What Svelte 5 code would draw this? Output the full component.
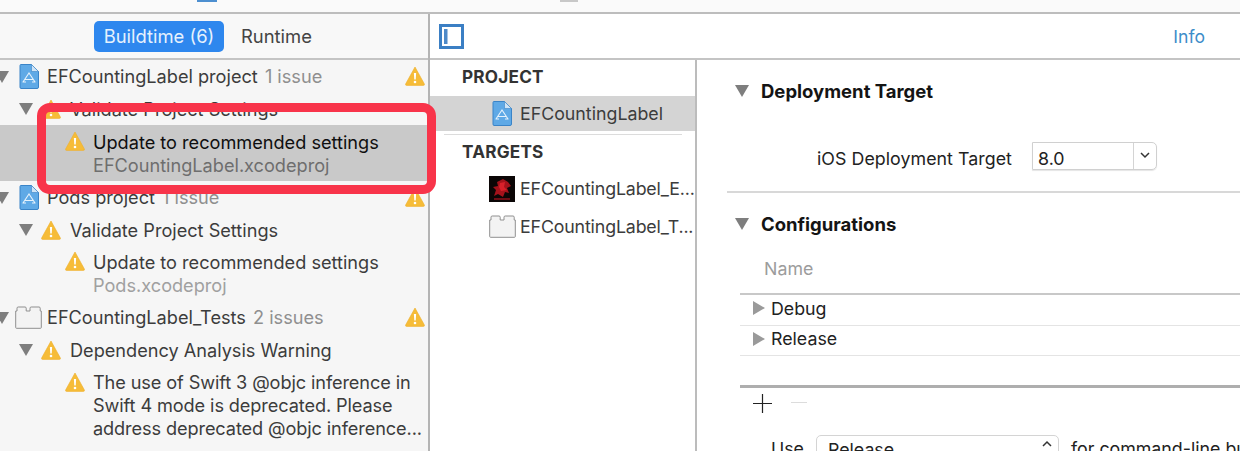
<script>
  const rows = [];
</script>

{#snippet warn(cls = '')}
  <svg class="warn {cls}" viewBox="0 0 20 20" width="20" height="20" aria-hidden="true">
    <path d="M10 1 L19.4 18 Q19.8 19.4 18.4 19.4 L1.6 19.4 Q.2 19.4 .6 18 Z" fill="#f6bc38" stroke="#eeb02c" stroke-width=".6" stroke-linejoin="round"/>
    <path d="M8.9 7 h2.2 l-.4 6.6 h-1.4 Z" fill="#fff"/>
    <circle cx="10" cy="16" r="1.3" fill="#fff"/>
  </svg>
{/snippet}

{#snippet disc(cls = '')}
  <svg class="disc {cls}" viewBox="0 0 14 12" width="14" height="12" aria-hidden="true"><path d="M0 0 H14 L7 12 Z" fill="#7e7e7e"/></svg>
{/snippet}

{#snippet proj()}
  <svg class="proj" viewBox="0 0 20 25" width="20" height="25" aria-hidden="true">
    <path d="M1 1.5 Q1 .5 2 .5 H12.5 L19.5 7.5 V23 Q19.5 24.5 18 24.5 H2 Q1 24.5 1 23 Z" fill="#5fa9e6" stroke="#3a84c8"/>
    <path d="M12.5 .5 V7.5 H19.5 Z" fill="#cfe4f6" stroke="#3a84c8" stroke-width=".6"/>
    <path d="M4 18 L10 9 L16 18 M6 15.5 H14 M3.5 18 H7 M13 18 H16.5" fill="none" stroke="#e6f2fc" stroke-width="1.1"/>
  </svg>
{/snippet}

{#snippet brick()}
  <svg class="brick" viewBox="0 0 27 23" width="27" height="23" aria-hidden="true">
    <path d="M.7 5 H2 V2.2 Q2 1 3.2 1 H10 Q11.2 1 11.2 2.2 V5 H15 V2.2 Q15 1 16.2 1 H24 Q25.2 1 25.2 2.2 V5 H26.3 V21.5 Q26.3 22.3 25.5 22.3 H1.5 Q.7 22.3 .7 21.5 Z" fill="#f3f3f3" stroke="#8f8f8f" stroke-width="1"/>
  </svg>
{/snippet}

<div class="app">
  <div class="strip"><i class="strip-a"></i><i class="strip-b"></i></div>

  <div class="main">
    <aside class="issues">
      <div class="tabs">
        <span class="tab on">Buildtime (6)</span>
        <span class="tab">Runtime</span>
      </div>

      <div class="tree">
        <div class="row l0 h33">{@render disc('d0')}<span class="ico">{@render proj()}</span><span class="t">EFCountingLabel project <em>1 issue</em></span>{@render warn('end')}</div>
        <div class="row l1 h32">{@render disc()}{@render warn()}<span class="t">Validate Project Settings</span></div>
        <div class="row l2 sel h56">{@render warn()}<div class="t2"><div>Update to recommended settings</div><div class="sub">EFCountingLabel.xcodeproj</div></div></div>

        <div class="row l0 h33">{@render disc('d0')}<span class="ico">{@render proj()}</span><span class="t">Pods project <em>1 issue</em></span>{@render warn('end')}</div>
        <div class="row l1 h31">{@render disc()}{@render warn()}<span class="t">Validate Project Settings</span></div>
        <div class="row l2 h56">{@render warn()}<div class="t2"><div>Update to recommended settings</div><div class="sub">Pods.xcodeproj</div></div></div>

        <div class="row l0 h33">{@render disc('d0')}<span class="ico">{@render brick()}</span><span class="t">EFCountingLabel_Tests <em>2 issues</em></span>{@render warn('end')}</div>
        <div class="row l1 h32">{@render disc()}{@render warn()}<span class="t">Dependency Analysis Warning</span></div>
        <div class="row l2 multi">{@render warn()}<div class="t2"><div>The use of Swift 3 @objc inference in</div><div>Swift 4 mode is deprecated. Please</div><div>address deprecated @objc inference...</div></div></div>
      </div>

      <div class="red"></div>
    </aside>

    <section class="editor">
      <div class="bar">
        <svg class="toggle" viewBox="0 0 25 25" width="25" height="25" aria-hidden="true">
          <rect x="1.5" y="1.5" width="22" height="22" fill="#fff" stroke="#3b7fc4" stroke-width="3"/>
          <rect x="5" y="5" width="3.5" height="15" fill="#4f8ac8"/>
        </svg>
        <span class="info">Info</span>
      </div>

      <div class="panes">
        <nav class="targets">
          <div class="head">PROJECT</div>
          <div class="trow psel">{@render proj()}<span>EFCountingLabel</span></div>
          <div class="rule"></div>
          <div class="head h2">TARGETS</div>
          <div class="trow t1">
            <svg class="app-ico" viewBox="0 0 26 26" width="26" height="26" aria-hidden="true">
              <rect width="26" height="26" fill="#0b0606"/>
              <path d="M8 6 L14 3 L19 6 L22 10 L18 12 L20 17 L16 16 L14 21 L9 18 L5 20 L7 14 L4 11 L9 10 Z" fill="#a4121b"/>
              <path d="M11 7 L16 6 L15 11 L18 14 L12 15 L10 11 Z" fill="#d8202a"/>
              <path d="M5 22 H21 V24 H5 Z" fill="#6d0d14"/>
            </svg>
            <span>EFCountingLabel_E...</span>
          </div>
          <div class="trow t2r">{@render brick()}<span>EFCountingLabel_T...</span></div>
        </nav>

        <div class="detail">
          <div class="sec-head first">{@render disc()}<strong>Deployment Target</strong></div>
          <div class="field">
            <label for="dt">iOS Deployment Target</label>
            <div class="combo" id="dt"><span>8.0</span><i>
              <svg viewBox="0 0 12 8" width="12" height="8" aria-hidden="true"><path d="M2 2 L6 6 L10 2" fill="none" stroke="#333" stroke-width="1.5"/></svg>
            </i></div>
          </div>
          <div class="hr"></div>
          <div class="sec-head second">{@render disc()}<strong>Configurations</strong></div>

          <div class="table">
            <div class="th">Name</div>
            <div class="tr"><svg viewBox="0 0 12 14" width="12" height="14" aria-hidden="true"><path d="M0 0 L12 7 L0 14 Z" fill="#9a9a9a"/></svg><span>Debug</span></div>
            <div class="tr"><svg viewBox="0 0 12 14" width="12" height="14" aria-hidden="true"><path d="M0 0 L12 7 L0 14 Z" fill="#9a9a9a"/></svg><span>Release</span></div>
            <div class="empty"></div>
          </div>

          <div class="tools">
            <svg viewBox="0 0 19 19" width="19" height="19" aria-hidden="true"><path d="M9.5 0 V19 M0 9.5 H19" stroke="#222" stroke-width="1.2"/></svg>
            <i class="minus"></i>
          </div>

          <div class="use">
            <span>Use</span>
            <div class="popup"><span>Release</span>
              <svg viewBox="0 0 12 8" width="12" height="8" aria-hidden="true"><path d="M2 6 L6 2 L10 6" fill="none" stroke="#333" stroke-width="1.5"/></svg>
            </div>
            <span class="cmd">for command-line builds</span>
          </div>
        </div>
      </div>
    </section>
  </div>
</div>

<style>
  :global(body) { margin: 0; background: #fff; }
  .app {
    width: 1240px; height: 451px; overflow: hidden; position: relative;
    font-family: Inter, "Liberation Sans", sans-serif;
    font-size: 18.15px; color: #3c3c3c; background: #fff;
  }
  .strip { height: 12px; border-bottom: 2px solid #bdbdbd; background: #fafafa; position: relative; box-sizing: content-box; display: flex; }
  .strip i { display: block; height: 2px; margin-top: 0; }
  .strip-a { width: 20px; margin-left: 197px; background: #4d8fd0; }
  .strip-b { width: 18px; margin-left: 343px; background: #c8c8c8; }

  .main { display: flex; height: 437px; }
  .issues { width: 428px; flex: none; background: #f6f6f6; border-right: 2px solid #b4b4b4; position: relative; }
  .tabs { height: 44px; border-bottom: 2px solid #c4c4c4; background: #f8f8f8; display: flex; align-items: center; padding-left: 94px; gap: 17px; }
  .tab { height: 31px; line-height: 31px; font-size: 18.4px; color: #444; }
  .tab.on { width: 130px; text-align: center; background: #2e87ee; color: #e6f1fd; border-radius: 5px; }

  .row { display: flex; align-items: center; position: relative; box-sizing: border-box; white-space: nowrap; }
  .h33 { height: 33px; } .h32 { height: 32px; } .h31 { height: 31px; } .h56 { height: 56px; }
  .l0 { padding-left: 0; }
  .l1 { padding-left: 19px; }
  .l2 { padding-left: 65px; align-items: flex-start; }
  .l2 .warn { margin-top: 6px; }
  .l2 .t2 { margin-left: 8px; padding-top: 6px; line-height: 23px; }
  .multi { height: 80px; }
  .multi .t2 { padding-top: 5px; letter-spacing: -.1px; }
  .sel { background: #c9c9c9; color: #0f0f0f; }
  .sel .sub { color: #6e6e6e; }
  .sub { color: #a0a0a0; }
  .disc { flex: none; }
  .d0 { margin-left: -5px; }
  .l1 .warn { margin-left: 8px; }
  .l1 .t { margin-left: 9px; }
  .ico { width: 27px; margin-left: 6px; flex: none; display: flex; justify-content: center; }
  .l0 .t { margin-left: 5px; padding-bottom: 2px; }
  em { font-style: normal; color: #8f8f8f; margin-left: 2px; }
  .end { position: absolute; left: 405px; top: 6px; }

  .red {
    position: absolute; left: 37px; top: 89px; width: 399px; height: 91px; box-sizing: border-box;
    border: 9px solid #f8344a; border-radius: 13px;
  }

  .editor { flex: 1; min-width: 0; }
  .bar { height: 44px; border-bottom: 2px solid #c4c4c4; display: flex; align-items: center; padding-left: 9px; padding-right: 35px; justify-content: space-between; }
  .info { color: #3d8dc9; font-size: 17.6px; }

  .panes { display: flex; height: 391px; font-size: 17.8px; }
  .targets { width: 265px; flex: none; border-right: 2px solid #bcbcbc; overflow: hidden; }
  .head { font-weight: 700; font-size: 17.2px; color: #333; padding: 6px 0 0 32px; height: 30px; line-height: 22px; letter-spacing: .2px; }
  .h2 { height: 29px; padding-top: 6px; }
  .trow { display: flex; align-items: center; white-space: nowrap; }
  .trow svg { flex: none; }
  .psel { height: 35px; background: #d4d4d4; padding-left: 62px; gap: 8px; }
  .rule { height: 1px; margin: 3px 13px 0 14px; background: #dcdcdc; }
  .t1 { height: 37px; padding-left: 59px; gap: 5px; letter-spacing: -.15px; }
  .t2r { height: 37px; padding-left: 59px; gap: 4px; margin-top: 1px; letter-spacing: -.15px; }

  .detail { flex: 1; min-width: 0; padding-left: 30px; color: #222; }
  .sec-head { display: flex; align-items: center; gap: 12px; padding-left: 8px; font-size: 18.5px; }
  .sec-head strong { color: #141414; }
  .first { height: 22px; margin-top: 20px; }
  .second { height: 22px; margin-top: 20px; }
  .field { display: flex; align-items: center; margin-top: 40px; padding-left: 90px; gap: 20px; color: #222; letter-spacing: .05px; }
  .field label { padding-top: 4px; }
  .combo { flex: none; width: 125px; height: 28px; box-sizing: border-box; border: 1px solid #d0d0d0; border-radius: 0 5px 5px 0; display: flex; align-items: center; justify-content: space-between; box-shadow: 0 1px 1px #e5e5e5; }
  .combo span { padding-left: 5px; padding-top: 4px; }
  .combo i { width: 23px; height: 100%; border-left: 1px solid #d4d4d4; display: flex; align-items: center; justify-content: center; padding-bottom: 3px; box-sizing: border-box; }
  .hr { height: 2px; background: #d8d8d8; margin-top: 21px; }
  .table { margin-left: 13px; margin-top: 20px; }
  .th { height: 46px; line-height: 40px; padding-left: 24px; color: #9c9c9c; box-sizing: border-box; border-bottom: 2px solid #c8c8c8; margin-top: -6px; }
  .tr { height: 30.5px; display: flex; align-items: center; gap: 6px; padding: 0 0 3px 13px; box-sizing: border-box; border-bottom: 1px solid #e4e4e4; }
  .empty { height: 32px; box-sizing: border-box; border-bottom: 3px solid #aeaeae; }
  .tools { display: flex; align-items: center; padding-left: 26px; margin-top: 6px; height: 19px; }
  .minus { display: block; width: 16px; height: 1px; background: #dcdcdc; margin-left: 19px; margin-top: -2px; }
  .use { display: flex; align-items: flex-start; margin-top: 22px; padding-left: 44px; white-space: nowrap; }
  .use > span:first-child { padding-top: 3px; }
  .popup { flex: none; width: 243px; height: 30px; box-sizing: border-box; border: 1px solid #d4d4d4; border-radius: 5px; margin-left: 12px; display: flex; justify-content: space-between; padding: 3px 5px 0 11px; }
  .popup svg { margin-top: 1px; }
  .cmd { margin-left: 12px; padding-top: 3px; }
</style>
